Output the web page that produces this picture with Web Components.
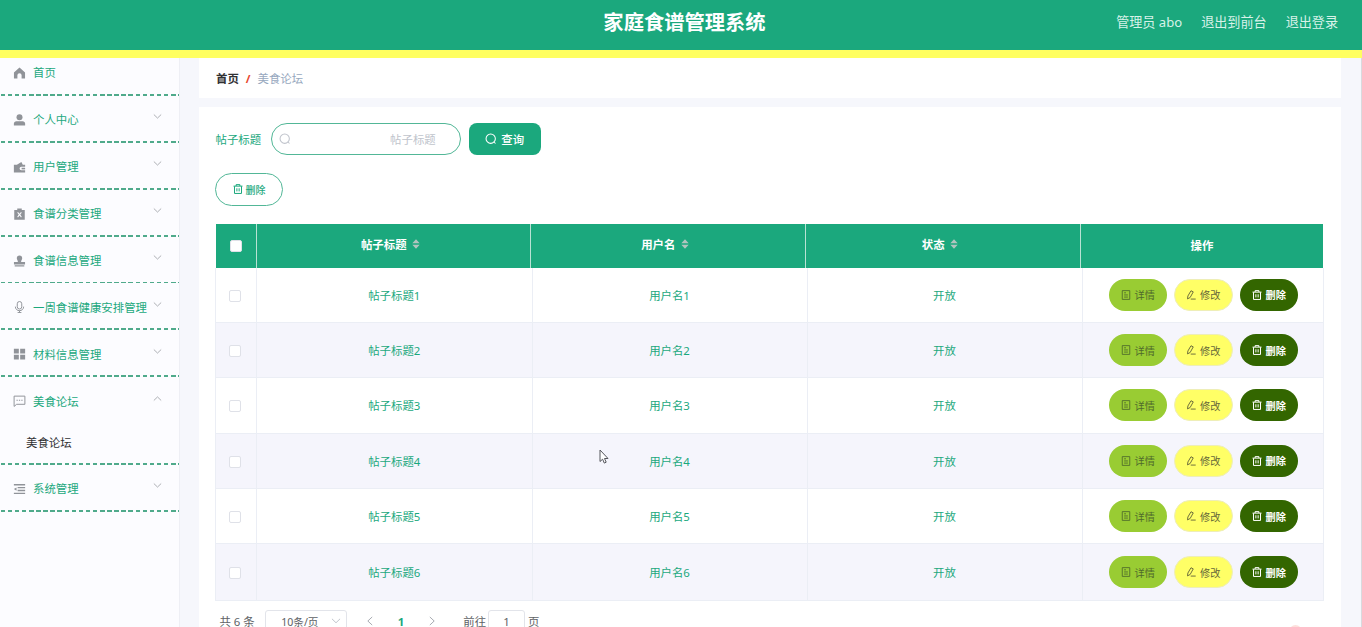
<!DOCTYPE html>
<html lang="zh-CN">
<head>
<meta charset="utf-8">
<title>家庭食谱管理系统</title>
<style>
  html, body {
    margin: 0;
    height: 627px;
    overflow: hidden;
    background: #f6f7fc;
    font-family: "Noto Sans", "Noto Sans CJK SC", sans-serif;
    font-size: 11.4px;
    --green: #1ba87d;
  }
</style>
</head>
<body>
<admin-layout>
  <top-bar slot="top" heading="家庭食谱管理系统">
    <span>管理员 abo</span>
    <span>退出到前台</span>
    <span>退出登录</span>
  </top-bar>
  <side-menu slot="side">
    <menu-item icon="home" label="首页" first></menu-item>
    <menu-item icon="user" label="个人中心" arrow="down"></menu-item>
    <menu-item icon="wallet" label="用户管理" arrow="down"></menu-item>
    <menu-item icon="clipboard" label="食谱分类管理" arrow="down"></menu-item>
    <menu-item icon="stamp" label="食谱信息管理" arrow="down"></menu-item>
    <menu-item icon="mic" label="一周食谱健康安排管理" arrow="down"></menu-item>
    <menu-item icon="grid" label="材料信息管理" arrow="down"></menu-item>
    <menu-item icon="chat" label="美食论坛" arrow="up"><span>美食论坛</span></menu-item>
    <menu-item icon="fold" label="系统管理" arrow="down"></menu-item>
  </side-menu>
  <bread-crumb root="首页" page="美食论坛"></bread-crumb>
  <content-card>
    <search-form label="帖子标题"></search-form>
    <data-table></data-table>
    <page-nav></page-nav>
  </content-card>
</admin-layout>
<float-dot></float-dot>
<mouse-pointer></mouse-pointer>

<script>
const icons = {
  home: '<path fill="currentColor" d="M8 .8.6 7.4v8h4.600v-4.400a2.800 2.800 0 0 1 5.600 0v4.400h4.600V7.400z"/>',
  user: '<circle cx="8" cy="4.4" r="4" fill="currentColor"/><path fill="currentColor" d="M.5 15.300v-2.400c0-2 1.400-3.400 3.400-3.400h8.200c2 0 3.400 1.400 3.400 3.400v2.400z"/>',
  wallet: '<path fill="currentColor" d="M.5 5h4l6-3.800L12.400 5h3.100v2.600h-5a2.300 2.300 0 0 0 0 4.800h5v3H.5z"/><path fill="currentColor" d="M10.800 9h4.700v2.200h-4.700z"/>',
  clipboard: '<path fill="currentColor" fill-rule="evenodd" d="M1 2.500h4V.6h6v1.900h4v13.200H1zM5 6.200l2 2.600-2 2.700 1 1 2-2.500 2 2.500 1-1-2-2.700 2-2.600-1-1-2 2.500-2-2.500z"/>',
  stamp: '<path fill="currentColor" d="M8 .6a3.700 3.700 0 0 0-3.600 3.600c0 2.300 1.800 2.800 1.400 5.200H.6v3.400h14.800V9.400h-5.200c-.4-2.400 1.400-2.900 1.400-5.200A3.700 3.700 0 0 0 8 .6zM1.600 13.600h12.800v1.600H1.600z"/>',
  mic: '<g fill="none" stroke="currentColor" stroke-width="1.300"><rect x="5" y=".7" width="6" height="10" rx="3"/><path d="M2.500 7.500c0 7.200 11 7.200 11 0M8 12.800v2.600M5.500 15.400h5"/></g>',
  grid: '<path fill="currentColor" d="M.5 1h6.600v6.200H.5zM8.900 1h6.600v6.200H8.900zM.5 9h6.600v6.200H.5zM8.900 9h6.600v6.200H8.900z"/>',
  chat: '<path fill="none" stroke="currentColor" stroke-width="1.300" d="M.8 1.500h14.400v10.900H4.200L.8 15.200z"/><path stroke="currentColor" stroke-width="1.600" d="M4 7h1.700M7.200 7h1.700M10.400 7h1.700"/>',
  fold: '<path fill="none" stroke="currentColor" stroke-width="1.900" d="M.5 2.400h15M5.500 6.200h10M5.500 10h10M.5 13.800h15"/><path fill="currentColor" d="M.5 8.100 4 5.900v4.400z"/>',
  search: '<circle cx="7.600" cy="7.600" r="6.200" fill="none" stroke="currentColor" stroke-width="1.400"/><path stroke="currentColor" stroke-width="1.400" d="m12 12 2 2"/>',
  trash: '<path fill="none" stroke="currentColor" stroke-width="1.600" d="M.8 3.400h14.400M5 3.200V1h6v2.200M2.400 3.600v11.500h11.200V3.600M6.200 6.800v5M9.800 6.800v5"/>',
  doc: '<path fill="none" stroke="currentColor" stroke-width="1.400" d="M2 1h12v14H2zM5 4.500h3M5 7.900h6M5 11.300h6"/>',
  edit: '<path fill="none" stroke="currentColor" stroke-width="1.500" d="M8 1.200 11.600 3 6.600 12l-4.200 2.200.6-4.600zM7.500 14.500h8"/>',
  down: '<path fill="none" stroke="currentColor" stroke-width="1.600" d="m1.500 4.500 6.500 6.300 6.500-6.300"/>',
  up: '<path fill="none" stroke="currentColor" stroke-width="1.600" d="m1.500 11.500 6.500-6.300 6.500 6.300"/>',
  left: '<path fill="none" stroke="currentColor" stroke-width="1.600" d="M11.500 1.500 4.500 8l7 6.500"/>',
  right: '<path fill="none" stroke="currentColor" stroke-width="1.600" d="m4.500 1.500 7 6.500-7 6.500"/>'
};

function define(name, render) {
  customElements.define(name, class extends HTMLElement {
    constructor() {
      super();
      this.attachShadow({ mode: "open" });
    }

    connectedCallback() {
      this.shadowRoot.innerHTML = render(this);
    }
  });
}

define("ui-icon", el => `
<style>
:host { display: inline-block; width: 12px; height: 12px; flex: none; }
svg { display: block; width: 100%; height: 100%; }
</style>
<svg viewBox="0 0 16 16">${icons[el.getAttribute("name")]}</svg>`);

define("admin-layout", () => `
<style>
:host {
  display: grid;
  grid-template: 58px 569px / 180px 1fr;
  height: 627px;
}
::slotted([slot=top]) { grid-column: 1 / 3; }
main {
  display: flex;
  flex-direction: column;
  gap: 9px;
  padding: 0 20px 0 19px;
  border-right: 1px solid #d9dade;
  overflow: hidden;
}
</style>
<slot name="top"></slot>
<slot name="side"></slot>
<main><slot></slot></main>`);

define("top-bar", el => `
<style>
:host {
  display: grid;
  grid-template-columns: 1fr auto 1fr;
  box-sizing: border-box;
  height: 58px;
  padding: 0 24px 0 31px;
  background: var(--green);
  border-bottom: 8px solid #ffff60;
  color: #fff;
}
h1 { grid-column: 2; margin: 0; font-size: 20.3px; line-height: 44px; }
nav {
  display: flex;
  justify-content: flex-end;
  gap: 19px;
  font-size: 13.1px;
  line-height: 44px;
  color: #d8f2e9;
}
</style>
<h1>${el.getAttribute("heading")}</h1>
<nav><slot></slot></nav>`);

define("side-menu", () => `
<style>
:host {
  display: block;
  background: #fcfcff;
  border-right: 1px solid #eeeff5;
}
</style>
<slot></slot>`);

define("menu-item", el => `
<style>
:host { display: block; color: var(--green); }
.row {
  display: flex;
  align-items: center;
  height: 45px;
  padding: 3px 17px 0 13px;
  box-sizing: border-box;
}
:host([first]) .row { height: 36px; padding-top: 0; padding-bottom: 6px; }
:host([first]) .label { margin-top: -2px; }
.row > ui-icon:first-child { width: 13px; color: #909399; margin-right: 7px; }
.label { flex: 1; white-space: nowrap; margin-top: -1px; }
:host([first]) .label { margin-top: -2.500px; }
.arrow { width: 9px; height: 9px; color: #a4a6ab; margin-top: -6px; }
::slotted(span) {
  display: block;
  padding-left: 26px;
  line-height: 41px;
  color: #303133;
}
:host([arrow=up]) .line { margin-top: -.5px; }
.line {
  height: 1.9px;
  background: repeating-linear-gradient(90deg, transparent 0 .7px, #4faa8b .7px 5.2px, transparent 5.2px 7.1px);
}
</style>
<div class="row">
  <ui-icon name="${el.getAttribute("icon")}"></ui-icon>
  <span class="label">${el.getAttribute("label")}</span>
  ${el.hasAttribute("arrow") ? `<ui-icon class="arrow" name="${el.getAttribute("arrow")}"></ui-icon>` : ""}
</div>
<slot></slot>
<div class="line"></div>`);

define("bread-crumb", el => `
<style>
:host {
  display: flex;
  flex: none;
  height: 40px;
  padding-left: 17px;
  line-height: 41px;
  background: #fff;
  color: #97a8be;
}
b { font-weight: 600; color: #303133; }
i { margin: 0 7px; font-style: normal; font-weight: 700; color: #e8492f; }
</style>
<b>${el.getAttribute("root")}</b><i>/</i><span>${el.getAttribute("page")}</span>`);

define("content-card", () => `
<style>
:host {
  display: block;
  flex: 1;
  padding: 16px 17px 0 16px;
  background: #fff;
}
</style>
<slot></slot>`);

define("search-form", el => `
<style>
:host { display: block; color: var(--green); }
.row { display: flex; align-items: center; height: 32px; padding-left: .5px; }
.field {
  display: flex;
  align-items: center;
  justify-content: space-between;
  box-sizing: border-box;
  width: 190px;
  height: 32px;
  margin: 0 8px 0 9.600px;
  padding: 0 24px 0 7px;
  border: 1px solid #52b797;
  border-radius: 16px;
  color: #c0c4cc;
}
.query {
  display: flex;
  align-items: center;
  justify-content: center;
  gap: 4px;
  width: 72px;
  height: 32px;
  border-radius: 8px;
  background: var(--green);
  color: #fff;
  font-weight: 500;
}
.delete {
  display: flex;
  align-items: center;
  justify-content: center;
  gap: 3px;
  box-sizing: border-box;
  width: 68px;
  height: 33px;
  margin: 18px 0;
  padding-bottom: 1px;
  border: 1px solid #52b797;
  border-radius: 17px;
  font-size: 10px;
  font-weight: 500;
}
.delete ui-icon { width: 10px; height: 10px; }
</style>
<div class="row">
  <span>${el.getAttribute("label")}</span>
  <div class="field"><ui-icon name="search"></ui-icon><span>${el.getAttribute("label")}</span></div>
  <div class="query"><ui-icon name="search"></ui-icon>查询</div>
</div>
<div class="delete"><ui-icon name="trash"></ui-icon>删除</div>`);

define("pill-button", el => `
<style>
:host {
  display: flex;
  align-items: center;
  justify-content: center;
  gap: 4px;
  box-sizing: border-box;
  width: 58.5px;
  height: 32px;
  border-radius: 16px;
  font-size: 10.2px;
  background: #9c3;
  color: #4f6b2c;
}
:host([kind=edit]) { background: #ffff66; border: 1px solid #eeeeb8; color: #66673a; }
:host([kind=trash]) { background: #360; color: #fff; font-weight: 700; }
ui-icon { width: 10px; height: 10px; }
</style>
<ui-icon name="${el.getAttribute("kind")}"></ui-icon><slot></slot>`);

define("sort-caret", () => `
<style>
:host { display: flex; width: 19.5px; justify-content: center; }
svg { display: block; }
</style>
<svg width="8" height="10" viewBox="0 0 8 10"><path fill="#b0c4bf" d="M4 .3 7.700 4.200H.3zM4 9.700.3 5.800h7.400z"/></svg>`);

define("data-table", () => {
  const rows = [1, 2, 3, 4, 5, 6].map(n => `
<div class="row">
  <div><span class="box"></span></div>
  <div>帖子标题${n}</div>
  <div>用户名${n}</div>
  <div>开放</div>
  <div class="actions">
    <pill-button kind="doc">详情</pill-button>
    <pill-button kind="edit">修改</pill-button>
    <pill-button kind="trash">删除</pill-button>
  </div>
</div>`).join("");
  return `
<style>
:host { display: block; color: var(--green); }
.head, .row { display: grid; }
.head {
  grid-template-columns: 41px 274px 275px 275px 1fr;
  height: 43.5px;
  margin: 0 1px 0 1px;
  background: var(--green);
  color: #fff;
  font-weight: 700;
}
.head > div, .row > div {
  display: flex;
  align-items: center;
  justify-content: center;
  box-sizing: border-box;
}
.head > div { padding-bottom: 3px; border-right: 1px solid #b8e2d4; }
.head > div:first-child { padding-top: 1px; padding-bottom: 0; }
.head > div:last-child { padding-bottom: 1px; border: 0; }
.body { border: 1px solid #ebeef5; border-top: 0; }
.row {
  grid-template-columns: 41px 275.5px 275px 275px 1fr;
  box-sizing: border-box;
  height: 55.4px;
  border-bottom: 1px solid #ebeef5;
}
.row:last-child { border-bottom: 0; }
.row:nth-child(even) { background: #f5f5fc; }
.row > div { border-right: 1px solid #ebeef5; }
.row > div:first-child { padding: 2px 2px 0 0; }
.row > div:last-child { border: 0; }
.row > .actions { gap: 7px; padding: 0 0 0 1px; }
.box {
  box-sizing: border-box;
  width: 12px;
  height: 12px;
  border: 1px solid #dfe1e8;
  border-radius: 2px;
  background: #fff;
}
</style>
<div class="head">
  <div><span class="box"></span></div>
  <div>帖子标题<sort-caret></sort-caret></div>
  <div>用户名<sort-caret></sort-caret></div>
  <div>状态<sort-caret></sort-caret></div>
  <div>操作</div>
</div>
<div class="body">${rows}</div>`;
});

define("page-nav", () => `
<style>
:host {
  display: flex;
  align-items: center;
  height: 23px;
  padding: 9px 0 0 4.4px;
  color: #606266;
}
.box {
  display: flex;
  align-items: center;
  box-sizing: border-box;
  height: 23px;
  border: 1px solid #e2e4ea;
  border-radius: 3px;
}
.size {
  justify-content: space-between;
  width: 82px;
  margin: 0 18px 0 10.6px;
  padding: 0 5px 0 15px;
  font-size: 10.6px;
}
.size ui-icon { color: #c0c4cc; }
.jump { justify-content: center; width: 37px; margin: 0 3px 0 2px; }
ui-icon { width: 10px; height: 10px; color: #a8abb2; }
b { margin: 0 22.5px; color: var(--green); }
.goto { margin-left: 26.5px; }
</style>
<span>共 6 条</span>
<div class="box size">10条/页<ui-icon name="down"></ui-icon></div>
<ui-icon name="left"></ui-icon><b>1</b><ui-icon name="right"></ui-icon>
<span class="goto">前往</span>
<div class="box jump">1</div>
<span>页</span>`);

define("float-dot", () => `
<style>
:host {
  position: absolute;
  left: 1289px;
  top: 625px;
  width: 13px;
  height: 13px;
  border-radius: 50%;
  background: #fde0dc;
}
</style>`);

define("mouse-pointer", () => `
<style>
:host { position: absolute; left: 599px; top: 449px; }
svg { display: block; }
</style>
<svg width="10" height="15" viewBox="0 0 10 15"><path d="M1 1v11.500l2.600-2.300 1.700 3.900 1.900-.9-1.700-3.700H9z" fill="#fff" stroke="#55565c"/></svg>`);
</script>
</body>
</html>
